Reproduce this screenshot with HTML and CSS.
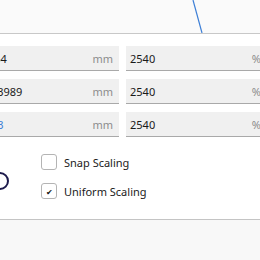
FILE: index.html
```html
<!DOCTYPE html>
<html lang="en">
<head>
    <meta charset="UTF-8">
    <title>Scale</title>
    <link rel="stylesheet" href="styles.css">
</head>
<body>
    <div class="preview">
        <svg class="guide" width="260" height="33" viewBox="0 0 260 33">
            <line x1="193" y1="0" x2="202" y2="33" stroke="#3d7fd6" stroke-width="1.2"/>
        </svg>
    </div>

    <div class="panel">
        <div class="fields">
            <div class="field"><span class="value">254</span><span class="unit">mm</span></div>
            <div class="field"><span class="value">2540</span><span class="unit">%</span></div>
            <div class="field"><span class="value">2.3989</span><span class="unit">mm</span></div>
            <div class="field"><span class="value">2540</span><span class="unit">%</span></div>
            <div class="field"><span class="value link">2.3</span><span class="unit">mm</span></div>
            <div class="field"><span class="value">2540</span><span class="unit">%</span></div>
        </div>

        <div class="options">
            <svg class="dial" width="12" height="24" viewBox="0 0 12 24">
                <circle cx="1" cy="12" r="8" fill="none" stroke="#1d1b4c" stroke-width="2"/>
            </svg>
            <div class="checks">
                <label class="check"><span class="box"></span>Snap Scaling</label>
                <label class="check"><span class="box on">&#10004;</span>Uniform Scaling</label>
            </div>
        </div>
    </div>

    <div class="footer"></div>
</body>
</html>
```

FILE: styles.css
```css
body {
    margin: 0;
    width: 260px;
    height: 260px;
    overflow: hidden;
    font-family: 'Noto Sans', 'Open Sans', sans-serif;
    font-size: 11px;
    color: #1a1a1a;
    background: #f8f8f8;
}
.preview {
    position: relative;
    height: 33px;
    background: #fafafa;
    border-bottom: 1px solid #c8c8c8;
}
.guide {
    position: absolute;
    left: 0;
    top: 0;
}
.panel {
    background: #fff;
    padding-top: 12px;
    height: 173px;
    border-bottom: 1px solid #c4c4c4;
}
.fields {
    display: grid;
    grid-template-columns: 135px 141px;
    column-gap: 7px;
    row-gap: 8px;
    margin-left: -16px;
}
.field {
    display: flex;
    align-items: center;
    justify-content: space-between;
    height: 24px;
    padding: 0 6px 0 4px;
    background: #f0f0f0;
    border-bottom: 1px solid #a9a9a9;
}
.value {
    color: #1a1a1a;
}
.value.link {
    color: #3d7fd6;
}
.unit {
    color: #8c8c8c;
}
.options {
    display: flex;
    align-items: center;
    margin-top: 17px;
}
.dial {
    margin-left: -1px;
    margin-top: 8px;
}
.checks {
    display: flex;
    flex-direction: column;
    gap: 13px;
    margin-left: 30px;
}
.check {
    display: flex;
    align-items: center;
    gap: 7px;
    height: 16px;
}
.box {
    width: 14px;
    height: 14px;
    border: 1px solid #b4b4b4;
    border-radius: 3px;
    background: #fff;
    display: flex;
    align-items: center;
    justify-content: center;
    font-size: 8px;
    color: #111;
}
.footer {
    height: 40px;
}
```
